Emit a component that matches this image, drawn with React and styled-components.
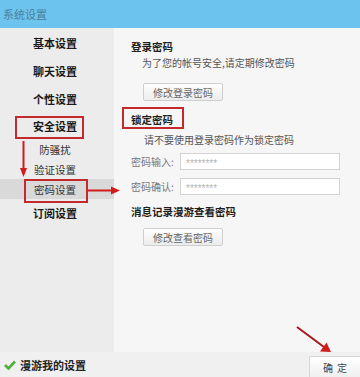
import React from 'react';
import styled, { createGlobalStyle } from 'styled-components';

const Global = createGlobalStyle`
  html, body { margin: 0; padding: 0; background: #f6f6f6; }
  body { font-family: "Noto Sans CJK SC", "Noto Sans", sans-serif; }
`;

const Window = styled.div`
  position: relative;
  width: 360px;
  height: 377px;
  display: flex;
  flex-direction: column;
  overflow: hidden;
  background: #f6f6f6;
`;

const TitleBar = styled.div`
  height: 28px;
  display: flex;
  align-items: center;
  padding-left: 3px;
  background: #6cc4ee;
  color: #4b7f9c;
  font-size: 11px;
`;

const Body = styled.div`
  flex: 1;
  display: flex;
  min-height: 0;
`;

const Sidebar = styled.div`
  width: 114px;
  background: #ececec;
  display: flex;
  flex-direction: column;
  padding-top: 1px;
`;

const NavItem = styled.div`
  height: ${p => (p.$sub ? 20 : p.$h || 28)}px;
  display: flex;
  align-items: center;
  justify-content: center;
  padding-right: 4px;
  font-size: ${p => (p.$sub ? 10.5 : 11)}px;
  font-weight: ${p => (p.$sub ? 400 : 700)};
  color: ${p => (p.$sub ? '#333' : '#1a1a1a')};
  background: ${p => (p.$active ? '#d9d9d9' : 'transparent')};
`;

const Content = styled.div`
  flex: 1;
  padding: 12px 0 0 17px;
  display: flex;
  flex-direction: column;
  align-items: flex-start;
`;

const Heading = styled.div`
  font-size: 10.5px;
  line-height: 14px;
  font-weight: 700;
  color: #1e1e1e;
  margin-top: ${p => p.$mt || 0}px;
`;

const Note = styled.div`
  font-size: 10px;
  line-height: 14px;
  color: #555;
  margin: ${p => p.$mt || 0}px 0 0 ${p => p.$ml || 11}px;
`;

const Button = styled.div`
  width: 78px;
  height: 16px;
  margin: ${p => p.$mt || 0}px 0 0 12px;
  display: flex;
  align-items: center;
  justify-content: center;
  border: 1px solid #cfcfcf;
  border-radius: 2px;
  background: linear-gradient(#fefefe, #ececec);
  font-size: 10px;
  color: #666;
`;

const FieldRow = styled.div`
  display: flex;
  align-items: center;
  margin-top: ${p => p.$mt || 0}px;
`;

const Label = styled.div`
  width: 49px;
  font-size: 10px;
  color: #777;
`;

const Input = styled.div`
  width: 160px;
  height: 17px;
  display: flex;
  align-items: center;
  padding: 3px 0 0 5px;
  box-sizing: border-box;
  background: #fff;
  border: 1px solid #d3d3d3;
  font-family: "Liberation Sans", sans-serif;
  font-size: 10px;
  color: #b4b4b4;
`;

const Footer = styled.div`
  height: 25px;
  display: flex;
  align-items: center;
  justify-content: space-between;
  background: #f0f0f0;
`;

const Roam = styled.div`
  display: flex;
  align-items: center;
  gap: 4px;
  padding-left: 4px;
  font-size: 11px;
  font-weight: 700;
  color: #222;
`;

const OkButton = styled.div`
  width: 50px;
  height: 20px;
  margin-top: 5px;
  display: flex;
  align-items: center;
  justify-content: center;
  border: 1px solid #d6d6d6;
  border-right: none;
  border-radius: 2px 0 0 0;
  background: linear-gradient(#ffffff, #efefef);
  font-size: 10px;
  color: #444;
  word-spacing: 2px;
`;

const Marks = styled.svg`
  position: absolute;
  left: 0;
  top: 0;
  pointer-events: none;
`;

const RED = '#d01c1c';
const BOX = '#c22a2c';

export default function App() {
  return (
    <Window>
      <Global />
      <TitleBar>系统设置</TitleBar>
      <Body>
        <Sidebar>
          <NavItem>基本设置</NavItem>
          <NavItem>聊天设置</NavItem>
          <NavItem>个性设置</NavItem>
          <NavItem $h={26}>安全设置</NavItem>
          <NavItem $sub>防骚扰</NavItem>
          <NavItem $sub>验证设置</NavItem>
          <NavItem $sub $active>密码设置</NavItem>
          <NavItem>订阅设置</NavItem>
        </Sidebar>
        <Content>
          <Heading>登录密码</Heading>
          <Note $mt={2}>为了您的帐号安全,请定期修改密码</Note>
          <Button $mt={13}>修改登录密码</Button>
          <Heading $mt={12}>锁定密码</Heading>
          <Note $mt={6} $ml={13}>请不要使用登录密码作为锁定密码</Note>
          <FieldRow $mt={6}>
            <Label>密码输入:</Label>
            <Input>********</Input>
          </FieldRow>
          <FieldRow $mt={8}>
            <Label>密码确认:</Label>
            <Input>********</Input>
          </FieldRow>
          <Heading $mt={10}>消息记录漫游查看密码</Heading>
          <Button $mt={9}>修改查看密码</Button>
        </Content>
      </Body>
      <Footer>
        <Roam>
          <svg width="12" height="10" viewBox="0 0 12 10">
            <path d="M1 5 L4.5 8.5 L11 1.5" fill="none" stroke="#4fae3c" strokeWidth="2.6" />
          </svg>
          漫游我的设置
        </Roam>
        <OkButton>确 定</OkButton>
      </Footer>
      <Marks width="360" height="377" viewBox="0 0 360 377">
        <rect x="16" y="117" width="67" height="21" fill="none" stroke={BOX} strokeWidth="2" />
        <rect x="25" y="180" width="62" height="22" fill="none" stroke={BOX} strokeWidth="2" />
        <rect x="123" y="108" width="60" height="20" fill="none" stroke={BOX} strokeWidth="2" />
        <line x1="23.5" y1="141" x2="23.5" y2="169" stroke={RED} strokeWidth="2" />
        <polygon points="20,168 27,168 23.5,177" fill={RED} />
        <line x1="88" y1="190.5" x2="112" y2="190.5" stroke={RED} strokeWidth="2" />
        <polygon points="111,186.5 111,194.5 120,190.5" fill={RED} />
        <line x1="297" y1="327" x2="324" y2="347" stroke="#a81818" strokeWidth="2" />
        <polygon points="320,351.5 326.5,342.5 331,352" fill={RED} />
      </Marks>
    </Window>
  );
}
